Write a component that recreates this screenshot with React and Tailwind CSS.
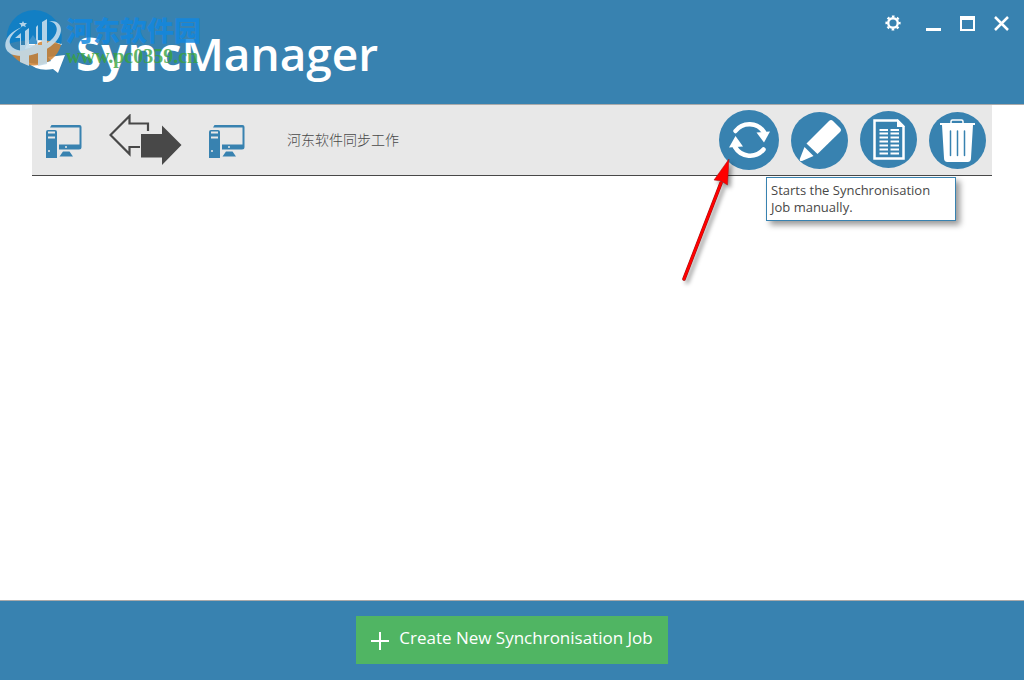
import React, { useState } from 'react';

const jobs = [{ id: 1, name: '河东软件同步工作' }];

function ComputerIcon() {
  return (
    <svg width="36" height="34" viewBox="0 0 36 34" fill="#3882b0" aria-hidden="true">
      <path d="M4 2.500 5.500 0H33.500Q35.500 0 35.500 2V22Q35.500 24.500 33 24.500H13V19.500H33.500V2.500Z" />
      <path d="M17 26.500H23.500L27 31.500H13.500Z" />
      <path d="M2 5H9Q11 5 11 7V33H0V7Q0 5 2 5Z" />
      <path d="M2 7.500H9M2 12.500H9" stroke="#e8e8e8" strokeWidth="2" />
      <circle cx="3" cy="26" r="1" fill="#e8e8e8" />
      <circle cx="20" cy="22" r="1" fill="#e8e8e8" />
    </svg>
  );
}

function DirectionIcon() {
  return (
    <svg width="73" height="52" viewBox="0 0 73 52" aria-hidden="true">
      <path
        d="M39 17V9.500H20.500V2L1.500 21L20.500 40V33H31"
        fill="none"
        stroke="#484848"
        strokeWidth="2.200"
      />
      <path d="M32 20H53V11.500L72.500 31L53 51V43.500H32Z" fill="#484848" />
    </svg>
  );
}

function SyncIcon() {
  return (
    <svg width="60" height="60" viewBox="0 0 60 60" aria-hidden="true">
      <circle cx="30" cy="30" r="30" fill="#3882b0" />
      <path d="M16.500 21A17.500 17.500 0 0 1 45 22" fill="none" stroke="#fff" strokeWidth="4.500" strokeLinecap="round" />
      <path d="M44.500 39.500A17.500 17.500 0 0 1 16 37" fill="none" stroke="#fff" strokeWidth="4.500" strokeLinecap="round" />
      <path d="M37.500 22.500 51 21.500 45 32.500Z" fill="#fff" />
      <path d="M10 37.500 16.500 26 24 36.500Z" fill="#fff" />
    </svg>
  );
}

function EditIcon() {
  return (
    <svg width="57" height="57" viewBox="0 0 57 57" aria-hidden="true">
      <circle cx="28.500" cy="28.500" r="28.500" fill="#3882b0" />
      <path d="M15.500 31.500 38 9Q40 7 42 9L49 16Q51 18 49 20L26.500 42Z" fill="#fff" />
      <path d="M13.500 35 22.500 44 11 49Q8 49.500 9 46.500Z" fill="#fff" />
    </svg>
  );
}

function LogIcon() {
  return (
    <svg width="57" height="57" viewBox="0 0 57 57" aria-hidden="true">
      <circle cx="28.500" cy="28.500" r="28.500" fill="#3882b0" />
      <path d="M14.500 9.500H37.500L43.500 15.500V47.500H14.500Z" fill="none" stroke="#fff" strokeWidth="2.500" />
      <path d="M37 8V16H45Z" fill="#fff" />
      <path
        d="M19.500 19H28M19.500 22.500H28M19.500 26.500H28M19.500 30.500H28M19.500 34.500H28M19.500 38.500H28M19.500 42.500H28M30.500 19H39M30.500 22.500H39M30.500 26.500H39M30.500 30.500H39M30.500 34.500H39M30.500 38.500H39M30.500 42.500H39"
        stroke="#fff"
        strokeWidth="2.200"
      />
    </svg>
  );
}

function DeleteIcon() {
  return (
    <svg width="57" height="57" viewBox="0 0 57 57" aria-hidden="true">
      <circle cx="28.500" cy="28.500" r="28.500" fill="#3882b0" />
      <path d="M22 12V9.500Q22 8 23.500 8H32.500Q34 8 34 9.500V12" fill="none" stroke="#fff" strokeWidth="1.500" />
      <path d="M11 11H46V13H44L42 46Q42 50 38.500 50H18.500Q15 50 15 46L13 13H11Z" fill="#fff" />
      <path d="M21.500 19V43.500M28.500 19V43.500M35.500 19V43.500" stroke="#3882b0" strokeWidth="1.500" strokeLinecap="round" />
    </svg>
  );
}

function SyncLogo() {
  return (
    <svg width="42" height="40" viewBox="0 0 42 40" fill="#fff" aria-hidden="true">
      <path d="M1 16Q4 3 22 3Q35 3 38 12Q31 9 22 11Q11 14 1 16Z" />
      <path d="M3 29Q12 33 27 28L24 24 41 22 34 40 29 36Q13 39 3 29Z" />
    </svg>
  );
}

// Site badge laid over the header
function Watermark() {
  return (
    <div className="pointer-events-none absolute left-1 top-2 flex">
      <svg width="60" height="60" viewBox="0 0 60 60" aria-hidden="true">
        <path d="M3.500 36A27.500 27.500 0 1 1 57 36Q30 28 3.500 36Z" fill="#127fc4" />
        <path d="M5 42Q18 46 29 38Q42 28 57 37A28 28 0 0 1 5 42Z" fill="#d18331" opacity=".85" />
        <g fill="#c5ddec" opacity=".9">
          <path d="M11 30 17 25V37H21V23L25 20V37H32V19L34 17V37H38V14L43 11V56L34 58V43H25V58L16 54V30Z" />
          <path d="M19 13 20 15 23 15 21 17 22 19 19 18 17 19 17 17 15 15 18 15Z" />
          <path d="M18 19C-1 26-4 43 10 47C26 51 48 42 55 29C60 19 55 12 45 13C54 15 55 23 49 30C40 40 21 46 11 41C1 36 6 26 18 19Z" />
        </g>
        <path d="M25 33 29 27 33 33V36H25Z" fill="#3f94cc" />
      </svg>
      <div className="flex flex-col pl-0.5 pt-1">
        <span className="font-['Noto_Sans_CJK_SC',sans-serif] text-[27px] leading-9 font-black text-[#1187e0]/85">河东软件园</span>
        <span className="font-['Liberation_Serif','Noto_Sans_CJK_SC',serif] text-xl leading-4 font-bold text-[#38a23c]/80">www.pc0359.cn</span>
      </div>
    </div>
  );
}

function PointerArrow() {
  return (
    <svg className="pointer-events-none absolute -left-10 top-12 drop-shadow-[3px_3px_2px_rgba(0,0,0,0.4)]" width="56" height="126" viewBox="0 0 56 126" aria-hidden="true">
      <path d="M5 121 42 25" stroke="#a01010" strokeWidth="3.500" strokeLinecap="round" />
      <path d="M5 121 42 25" stroke="#f00" strokeWidth="2.500" strokeLinecap="round" />
      <path d="M50 1 48.500 27 42 23 35 22Z" fill="#f00" stroke="#a01010" strokeWidth=".5" />
    </svg>
  );
}

export default function App() {
  const [showTip, setShowTip] = useState(true);

  return (
    <div className="flex min-h-screen flex-col bg-white font-['Open_Sans','Noto_Sans_CJK_SC',sans-serif] text-[#484848]">
      <header className="relative flex h-[105px] items-start justify-between border-b border-[#aaa] bg-[#3882b0] text-white">
        <div className="flex items-center pl-6 pt-5">
          <SyncLogo />
          <h1 className="pl-2.5 text-[46px] leading-[66px]">
            <span className="font-bold">Sync</span>
            <span className="font-semibold">Manager</span>
          </h1>
        </div>
        <div className="flex gap-4 pr-[15px] pt-[11px]">
          <button type="button" aria-label="Settings" className="mr-1 flex size-6 items-center justify-center">
            <svg width="16" height="16" viewBox="0 0 16 16" fill="none" stroke="#fff" aria-hidden="true">
              <circle cx="8" cy="8" r="4.800" strokeWidth="2.400" />
              <circle cx="8" cy="8" r="6.600" strokeWidth="2" strokeDasharray="2.600 2.584" strokeDashoffset="1.300" />
            </svg>
          </button>
          <button type="button" aria-label="Minimise" className="flex h-6 w-4 items-center justify-center">
            <svg width="15" height="15" aria-hidden="true"><path d="M0 12H15V15H0Z" fill="#fff" /></svg>
          </button>
          <button type="button" aria-label="Maximise" className="ml-0.5 flex h-6 w-4 items-center justify-center">
            <svg width="15" height="15" aria-hidden="true"><path fillRule="evenodd" d="M0 0H15V15H0ZM2 4V13H13V4Z" fill="#fff" /></svg>
          </button>
          <button type="button" aria-label="Close" className="ml-0.5 flex h-6 w-4 items-center justify-center">
            <svg width="15" height="15" aria-hidden="true"><path d="M1 1 14 14M14 1 1 14" stroke="#fff" strokeWidth="2.500" /></svg>
          </button>
        </div>
        <Watermark />
      </header>

      <main className="flex-1 px-8">
        <ul>
          {jobs.map((job) => (
            <li key={job.id} className="flex h-[71px] items-center justify-between border-b border-[#484848] bg-[#e8e8e8] pl-3.5 pr-1.5">
              <div className="flex items-center">
                <div className="pt-1"><ComputerIcon /></div>
                <div className="px-[27px]"><DirectionIcon /></div>
                <div className="pt-1"><ComputerIcon /></div>
                <span className="pl-[42px] text-sm font-light">{job.name}</span>
              </div>
              <div className="flex items-center gap-3">
                <div className="relative">
                  <button
                    type="button"
                    aria-label="Synchronise"
                    aria-describedby="sync-tip"
                    onClick={() => setShowTip(!showTip)}
                    className="block"
                  >
                    <SyncIcon />
                  </button>
                  {showTip && (
                    <>
                      <PointerArrow />
                      <div
                        id="sync-tip"
                        role="tooltip"
                        className="absolute left-[47px] top-[67px] w-[190px] border border-[#3882b0] bg-white p-1 text-[13px] leading-[17px] shadow-[4px_4px_6px_rgba(0,0,0,0.4)]"
                      >
                        Starts the Synchronisation Job manually.
                      </div>
                    </>
                  )}
                </div>
                <button type="button" aria-label="Edit"><EditIcon /></button>
                <button type="button" aria-label="Log" className="pb-0.5"><LogIcon /></button>
                <button type="button" aria-label="Delete"><DeleteIcon /></button>
              </div>
            </li>
          ))}
        </ul>
      </main>

      <footer className="flex h-20 items-start justify-center border-t border-[#aaa] bg-[#3882b0] pt-[15px]">
        <button type="button" className="flex h-12 items-center gap-2.5 bg-[#50b563] px-[15px] text-[17px] text-white">
          <svg className="mt-0.5" width="18" height="18" aria-hidden="true"><path d="M9 0V18M0 9H18" stroke="#fff" strokeWidth="2" /></svg>
          <span className="pb-1">Create New Synchronisation Job</span>
        </button>
      </footer>
    </div>
  );
}
